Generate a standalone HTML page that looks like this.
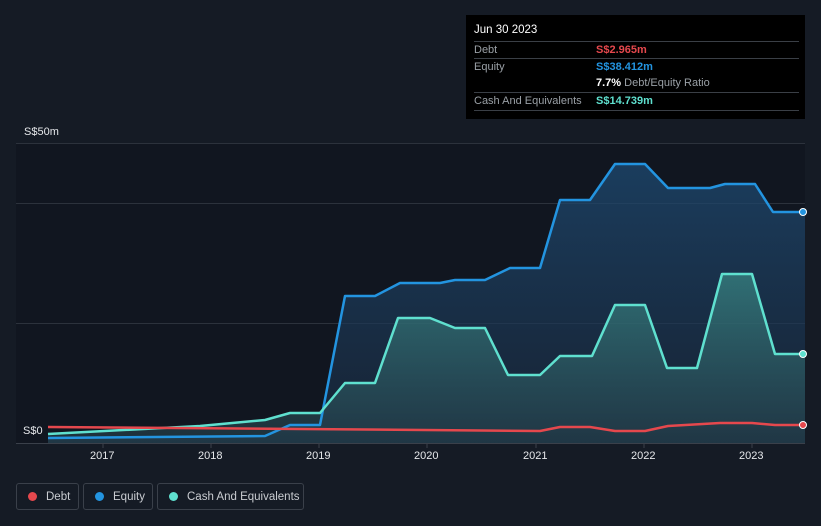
<!DOCTYPE html>
<html><head><style>
html,body{margin:0;width:821px;height:526px;overflow:hidden}
body{background:#151b25;font-family:"Liberation Sans",sans-serif;position:relative}
.tip{position:absolute;left:466px;top:15px;width:339px;height:104px;background:#000;color:#fff;font-size:11px}
.tip .r{position:absolute;left:8px;right:6px;border-top:1px solid #3a3f46;height:17px;line-height:17px;color:#9aa0a6}
.tip .v{position:absolute;left:122px;font-weight:bold}
.leg{position:absolute;top:483px;height:27px;border:1px solid #3a404a;border-radius:3px;color:#c9ccd1;font-size:11.5px;line-height:26px;box-sizing:border-box;white-space:nowrap;overflow:hidden}
.leg i{display:inline-block;width:9px;height:9px;border-radius:50%;margin:0 9px 0 11px;vertical-align:-1px}
.ax{position:absolute;top:450px;color:#e6e8eb;font-size:11px}
</style></head><body>
<svg width="821" height="526" style="position:absolute;left:0;top:0">
<defs>
<linearGradient id="ge" x1="0" y1="0" x2="0" y2="1"><stop offset="0" stop-color="#1e4a72" stop-opacity=".75"/><stop offset="1" stop-color="#1a2c42" stop-opacity=".6"/></linearGradient>
<linearGradient id="gc" x1="0" y1="0" x2="0" y2="1"><stop offset="0" stop-color="#3a8a86" stop-opacity=".7"/><stop offset="1" stop-color="#2a4a55" stop-opacity=".5"/></linearGradient>
</defs>
<rect x="16" y="143" width="789" height="300" fill="#111620"/>
<g stroke="#2c323c" stroke-width="1"><line x1="16" y1="143.5" x2="805" y2="143.5"/><line x1="16" y1="203.5" x2="805" y2="203.5"/><line x1="16" y1="323.5" x2="805" y2="323.5"/></g>
<line x1="16" y1="443.5" x2="805" y2="443.5" stroke="#3a404a"/>
<g stroke="#3a404a"><line x1="103" y1="444" x2="103" y2="448"/><line x1="211" y1="444" x2="211" y2="448"/><line x1="319" y1="444" x2="319" y2="448"/><line x1="427" y1="444" x2="427" y2="448"/><line x1="536" y1="444" x2="536" y2="448"/><line x1="644" y1="444" x2="644" y2="448"/><line x1="752" y1="444" x2="752" y2="448"/></g>
<polygon fill="url(#ge)" points="48,438 265,436 290,425 320,425 345,296 375,296 400,283 440,283 455,280 485,280 510,268 540,268 560,200 590,200 615,164 645,164 668,188 710,188 725,184 755,184 773,212 805,212 805,443 48,443"/>
<polygon fill="url(#gc)" points="48,434 200,426 265,420 290,413 320,413 345,383 375,383 398,318 430,318 455,328 485,328 508,375 540,375 560,356 592,356 615,305 645,305 667,368 697,368 722,274 752,274 775,354 805,354 805,443 48,443"/>
<polyline fill="none" stroke="#2394e0" stroke-width="2.5" stroke-linejoin="round" points="48,438 265,436 290,425 320,425 345,296 375,296 400,283 440,283 455,280 485,280 510,268 540,268 560,200 590,200 615,164 645,164 668,188 710,188 725,184 755,184 773,212 805,212"/>
<polyline fill="none" stroke="#5fe0cf" stroke-width="2.5" stroke-linejoin="round" points="48,434 200,426 265,420 290,413 320,413 345,383 375,383 398,318 430,318 455,328 485,328 508,375 540,375 560,356 592,356 615,305 645,305 667,368 697,368 722,274 752,274 775,354 805,354"/>
<polyline fill="none" stroke="#e5484d" stroke-width="2.5" stroke-linejoin="round" points="48,427 300,429 540,431 560,427 590,427 615,431 645,431 668,426 720,423 752,423 775,425 805,425"/>
<circle cx="803" cy="212" r="3.5" fill="#2394e0" stroke="#fff" stroke-width="1"/>
<circle cx="803" cy="354" r="3.5" fill="#5fe0cf" stroke="#fff" stroke-width="1"/>
<circle cx="803" cy="425" r="3.5" fill="#e5484d" stroke="#fff" stroke-width="1"/>
</svg>
<div style="position:absolute;left:24px;top:126px;color:#e6e8eb;font-size:11px">S$50m</div>
<div style="position:absolute;left:23px;top:425px;color:#e6e8eb;font-size:11px">S$0</div>
<div class="ax" style="left:90px">2017</div><div class="ax" style="left:198px">2018</div><div class="ax" style="left:306px">2019</div><div class="ax" style="left:414px">2020</div><div class="ax" style="left:523px">2021</div><div class="ax" style="left:631px">2022</div><div class="ax" style="left:739px">2023</div>
<div class="tip">
<div style="position:absolute;left:8px;top:9px;font-size:11.5px">Jun 30 2023</div>
<div class="r" style="top:26px">Debt<span class="v" style="color:#e5484d">S$2.965m</span></div>
<div class="r" style="top:43px">Equity<span class="v" style="color:#2394e0">S$38.412m</span></div>
<div class="r" style="top:60px;border-top:none"><span class="v" style="color:#fff">7.7% <span style="color:#9aa0a6;font-weight:normal">Debt/Equity Ratio</span></span></div>
<div class="r" style="top:77px">Cash And Equivalents<span class="v" style="color:#5fe0cf">S$14.739m</span></div>
<div style="position:absolute;left:8px;right:6px;top:95px;border-top:1px solid #3a3f46"></div>
</div>
<div class="leg" style="left:16px;width:63px"><i style="background:#e5484d"></i>Debt</div>
<div class="leg" style="left:83px;width:70px"><i style="background:#2394e0"></i>Equity</div>
<div class="leg" style="left:157px;width:147px"><i style="background:#5fe0cf"></i>Cash And Equivalents</div>
</body></html>
